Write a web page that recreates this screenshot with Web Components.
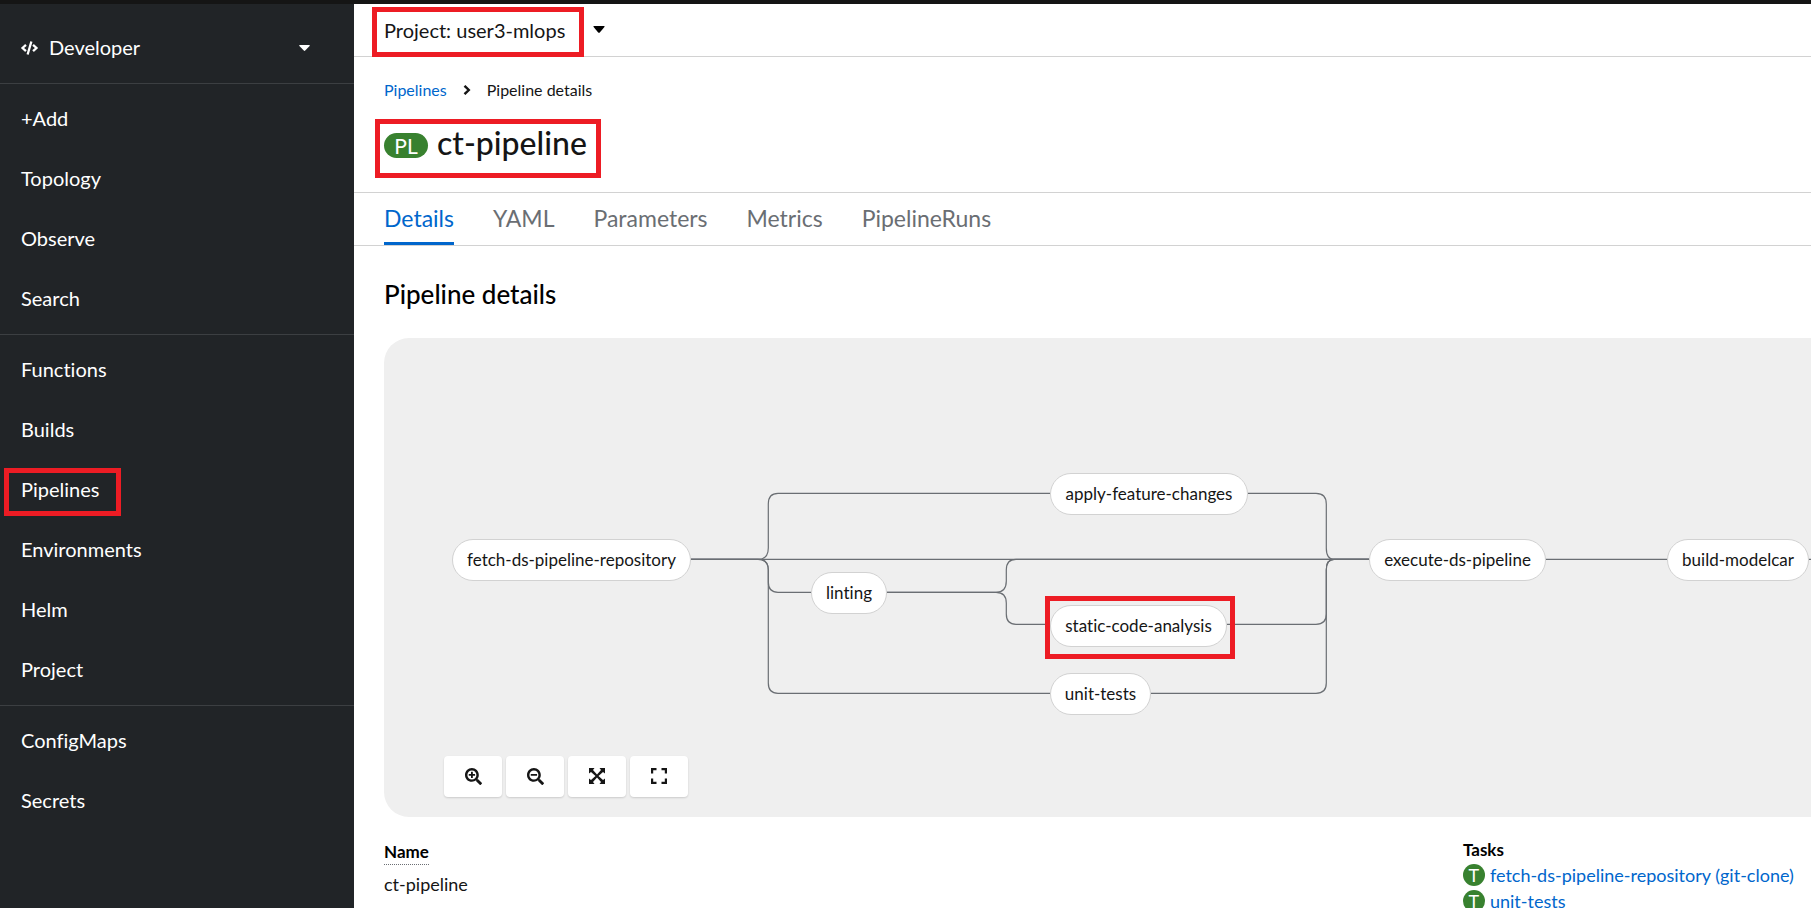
<!DOCTYPE html>
<html lang="en">
<head>
<meta charset="utf-8">
<title>ct-pipeline · Pipeline details</title>
<style>
  html, body { margin: 0; height: 100%; }
  body { background: #fff; color: #151515; font: 400 18px/24px Lato, "Liberation Sans", sans-serif; font-variant-ligatures: none; overflow: hidden; }
</style>
</head>
<body>
<console-shell>
  <console-nav slot="nav">
    <nav-section>
      <nav-item>+Add</nav-item>
      <nav-item>Topology</nav-item>
      <nav-item>Observe</nav-item>
      <nav-item>Search</nav-item>
    </nav-section>
    <nav-section>
      <nav-item>Functions</nav-item>
      <nav-item>Builds</nav-item>
      <nav-item marked>Pipelines</nav-item>
      <nav-item>Environments</nav-item>
      <nav-item>Helm</nav-item>
      <nav-item>Project</nav-item>
    </nav-section>
    <nav-section>
      <nav-item>ConfigMaps</nav-item>
      <nav-item>Secrets</nav-item>
    </nav-section>
  </console-nav>
  <project-bar>Project: user3-mlops</project-bar>
  <page-heading kind="PL" parent="Pipelines" current="Pipeline details">ct-pipeline</page-heading>
  <page-tabs items="Details,YAML,Parameters,Metrics,PipelineRuns"></page-tabs>
  <pipeline-details></pipeline-details>
</console-shell>

<script>
const define = (name, html, setup) => {
  const template = document.createElement('template');
  template.innerHTML = html;
  customElements.define(name, class extends HTMLElement {
    constructor() {
      super();
      this.attachShadow({ mode: 'open' }).append(template.content.cloneNode(true));
    }
    connectedCallback() {
      if (setup && !this.ready) { this.ready = true; setup(this, this.shadowRoot); }
    }
  });
};

/* Red frame drawn round whatever is slotted in. */
define('call-out', `
  <style>
    :host { display: block; width: fit-content; position: relative; }
    i { position: absolute; inset: var(--frame, -8px); border: 5px solid #ed1c24; pointer-events: none; }
  </style>
  <slot></slot><i></i>`);

define('console-shell', `
  <style>
    :host { display: grid; grid-template-columns: 354px minmax(0, 1fr); height: 100vh; overflow: hidden; border-top: 4px solid #151515; box-sizing: border-box; }
    main { min-width: 0; }
  </style>
  <slot name="nav"></slot><main><slot></slot></main>`);

define('console-nav', `
  <style>
    :host { display: block; background: #212427; color: #fff; }
    button { display: flex; align-items: center; box-sizing: border-box; width: 100%; height: 80px; padding: 8px 44px 0 21px; border: 0; border-bottom: 1px solid #3c3f42; background: none; color: inherit; font: inherit; font-variant-ligatures: inherit; font-size: 20px; text-align: left; }
    span { flex: 1; margin-left: 11px; padding-bottom: 2px; }
  </style>
  <button type="button">
    <svg width="17" height="14" viewBox="0 0 640 512" fill="currentColor" aria-hidden="true"><path d="M278.9 511.5l-61-17.7c-6.4-1.8-10-8.5-8.2-14.9L346.2 8.7c1.8-6.4 8.5-10 14.9-8.2l61 17.7c6.4 1.8 10 8.5 8.2 14.9L293.8 503.3c-1.9 6.4-8.5 10.1-14.9 8.2zm-114-112.2l43.5-46.4c4.6-4.9 4.3-12.7-.8-17.2L117 256l90.6-79.7c5.1-4.5 5.5-12.3.8-17.2l-43.5-46.4c-4.5-4.8-12.1-5.1-17-.5L3.8 247.2c-5.1 4.7-5.1 12.8 0 17.5l144.1 135.1c4.9 4.6 12.5 4.4 17-.5zm327.2.6l144.1-135.1c5.1-4.7 5.1-12.8 0-17.5L492.1 112.1c-4.8-4.5-12.4-4.3-17 .5L431.6 159c-4.6 4.9-4.3 12.7.8 17.2L523 256l-90.6 79.7c-5.1 4.5-5.5 12.3-.8 17.2l43.5 46.4c4.5 4.9 12.1 5.1 17 .6z"/></svg>
    <span>Developer</span>
    <svg width="11" height="6" viewBox="0 0 11 6" fill="currentColor" aria-hidden="true"><path d="M.8 0h9.4q1 .2.4 1L6.2 5.6q-.7.6-1.4 0L.4 1Q-.2.2.8 0z"/></svg>
  </button>
  <nav><slot></slot></nav>`);

define('nav-section', `
  <style>
    :host { display: block; padding: 5px 0; border-bottom: 1px solid #3c3f42; }
    :host(:last-child) { border-bottom: 0; }
  </style>
  <slot></slot>`);

define('nav-item', `
  <style>
    :host { display: block; }
    a { display: flex; align-items: center; box-sizing: border-box; height: 60px; padding: 0 0 2px 21px; color: #fff; font-size: 20px; text-decoration: none; }
    call-out { --frame: -9px -22px -15px -17px; }
  </style>
  <a href="#"><slot></slot></a>`, (host, root) => {
    if (!host.hasAttribute('marked')) return;
    const frame = document.createElement('call-out');
    const slot = root.querySelector('slot');
    slot.replaceWith(frame);
    frame.append(slot);
  });

define('project-bar', `
  <style>
    :host { display: block; border-bottom: 1px solid #d2d2d2; }
    button { display: flex; align-items: center; gap: 28px; box-sizing: border-box; height: 52px; padding: 0 0 0 30px; border: 0; background: none; color: inherit; font: inherit; font-variant-ligatures: inherit; font-size: 20px; }
    call-out { --frame: -11px -19px -14px -12px; padding-bottom: 1px; }
    svg { margin-bottom: 1px; }
  </style>
  <button type="button">
    <call-out><slot></slot></call-out>
    <svg width="12" height="7" viewBox="0 0 12 7" aria-hidden="true"><path d="M1 0h10q1 .2.4 1.1L6.8 6.4q-.8.8-1.6 0L.6 1.1Q0 .2 1 0z"/></svg>
  </button>`);

define('page-heading', `
  <style>
    :host { display: block; padding: 21px 0 29px 30px; border-bottom: 1px solid #d2d2d2; }
    nav { display: flex; align-items: center; gap: 16px; font-size: 16px; }
    a { color: #06c; text-decoration: none; }
    h1 { margin: 21px 0 0; font-size: 32px; line-height: 40px; font-weight: 500; }
    call-out { --frame: -4px -14px -15px -9px; }
    .row { display: flex; align-items: center; gap: 9px; }
    .kind { box-sizing: border-box; width: 44px; height: 25px; margin-top: 4px; border-radius: 13px; background: #38812f; color: #fff; font-size: 21px; line-height: 25px; font-weight: 400; text-align: center; }
  </style>
  <nav aria-label="Breadcrumb">
    <a href="#"></a>
    <svg width="8" height="10" viewBox="0 0 8 10" fill="none" stroke="#151515" stroke-width="2.4" aria-hidden="true"><path d="M1.5.8 5.8 5 1.5 9.2"/></svg>
    <span class="current"></span>
  </nav>
  <h1><call-out><span class="row"><span class="kind"></span><slot></slot></span></call-out></h1>`, (host, root) => {
    root.querySelector('a').textContent = host.getAttribute('parent');
    root.querySelector('.current').textContent = host.getAttribute('current');
    root.querySelector('.kind').textContent = host.getAttribute('kind');
  });

define('page-tabs', `
  <style>
    :host { display: block; padding-left: 30px; border-bottom: 1px solid #d2d2d2; }
    div { display: flex; gap: 39px; }
    button { height: 52px; padding: 0; border: 0; border-bottom: 3px solid transparent; background: none; color: #6a6e73; font: inherit; font-variant-ligatures: inherit; font-size: 23px; }
    button[aria-selected=true] { color: #06c; border-color: #06c; }
  </style>
  <div role="tablist"></div>`, (host, root) => {
    host.getAttribute('items').split(',').forEach((label, i) => {
      const tab = document.createElement('button');
      tab.type = 'button';
      tab.setAttribute('role', 'tab');
      tab.setAttribute('aria-selected', String(i === 0));
      tab.textContent = label;
      root.querySelector('div').append(tab);
    });
  });

define('pipeline-node', `
  <style>
    :host { display: flex; align-items: center; justify-content: center; box-sizing: border-box; position: absolute; height: 42px; border: 1px solid #d2d2d2; border-radius: 21px; background: #fff; font-size: 17px; white-space: nowrap; }
    i { position: absolute; inset: -10px -9px -13px -6px; border: 5px solid #ed1c24; display: none; }
    :host([marked]) i { display: block; }
  </style>
  <slot></slot><i></i>`);

define('pipeline-graph', `
  <style>
    :host { display: block; position: relative; height: 479px; overflow: hidden; background: #efefef; border-radius: 25px 0 0 25px; }
    .edges { position: absolute; left: 0; top: 0; }
    .tools { position: absolute; left: 60px; bottom: 20px; display: flex; gap: 4px; }
    .tools button { display: flex; align-items: center; justify-content: center; width: 58px; height: 41px; padding: 0 0 1px; border: 0; border-radius: 4px; background: #fff; color: #151515; box-shadow: 0 1px 2px rgba(3, 3, 3, .15); }
  </style>
  <svg class="edges" width="1440" height="479" fill="none" stroke="#6a6e73" stroke-width="1.2" aria-hidden="true">
    <path d="M307 221.300H985"/>
    <path d="M307 221.300H374Q384.300 221.300 384.300 210V166Q384.300 155.300 394 155.300H666"/>
    <path d="M307 221.300H374Q384.300 221.300 384.300 232V244Q384.300 254.300 394 254.300H427"/>
    <path d="M307 221.300H374Q384.300 221.300 384.300 232V345Q384.300 355.300 394 355.300H666"/>
    <path d="M503 254.300H612Q622.300 254.300 622.300 243V232Q622.300 221.300 632 221.300H985"/>
    <path d="M503 254.300H612Q622.300 254.300 622.300 265V276Q622.300 286.300 632 286.300H666"/>
    <path d="M864 155.300H932Q942.300 155.300 942.300 166V210Q942.300 221.300 950 221.300H985"/>
    <path d="M843 286.300H932Q942.300 286.300 942.300 276V232Q942.300 221.300 950 221.300H985"/>
    <path d="M767 355.300H932Q942.300 355.300 942.300 345V232Q942.300 221.300 950 221.300H985"/>
    <path d="M1161 221.300H1283M1425 221.300H1440"/>
  </svg>
  <pipeline-node style="left:68px;top:201px;width:239px">fetch-ds-pipeline-repository</pipeline-node>
  <pipeline-node style="left:427px;top:234px;width:76px">linting</pipeline-node>
  <pipeline-node style="left:666px;top:135px;width:198px">apply-feature-changes</pipeline-node>
  <pipeline-node style="left:666px;top:267px;width:177px" marked>static-code-analysis</pipeline-node>
  <pipeline-node style="left:666px;top:335px;width:101px">unit-tests</pipeline-node>
  <pipeline-node style="left:985px;top:201px;width:177px">execute-ds-pipeline</pipeline-node>
  <pipeline-node style="left:1283px;top:201px;width:142px">build-modelcar</pipeline-node>
  <div class="tools">
    <button type="button" aria-label="Zoom in"><svg width="17" height="17" viewBox="0 0 512 512" fill="currentColor"><path d="M304 192v32c0 6.600-5.400 12-12 12h-56v56c0 6.600-5.400 12-12 12h-32c-6.600 0-12-5.400-12-12v-56h-56c-6.600 0-12-5.400-12-12v-32c0-6.600 5.400-12 12-12h56v-56c0-6.600 5.400-12 12-12h32c6.600 0 12 5.400 12 12v56h56c6.600 0 12 5.400 12 12zm201 284.700L476.700 505c-9.400 9.400-24.600 9.400-33.900 0L343 405.300c-4.500-4.500-7-10.600-7-17V372c-35.300 27.600-79.700 44-128 44C93.100 416 0 322.900 0 208S93.100 0 208 0s208 93.100 208 208c0 48.300-16.400 92.700-44 128h16.300c6.400 0 12.500 2.500 17 7l99.700 99.700c9.300 9.400 9.300 24.600 0 34zM344 208c0-75.200-60.800-136-136-136S72 132.800 72 208s60.800 136 136 136 136-60.800 136-136z"/></svg></button>
    <button type="button" aria-label="Zoom out"><svg width="17" height="17" viewBox="0 0 512 512" fill="currentColor"><path d="M304 192v32c0 6.600-5.400 12-12 12H124c-6.600 0-12-5.400-12-12v-32c0-6.600 5.400-12 12-12h168c6.600 0 12 5.400 12 12zm201 284.700L476.700 505c-9.400 9.400-24.600 9.400-33.900 0L343 405.300c-4.500-4.500-7-10.600-7-17V372c-35.300 27.600-79.700 44-128 44C93.100 416 0 322.900 0 208S93.100 0 208 0s208 93.100 208 208c0 48.300-16.400 92.700-44 128h16.300c6.400 0 12.500 2.500 17 7l99.700 99.700c9.300 9.400 9.300 24.600 0 34zM344 208c0-75.200-60.800-136-136-136S72 132.800 72 208s60.800 136 136 136 136-60.800 136-136z"/></svg></button>
    <button type="button" aria-label="Fit to screen"><svg width="16" height="16" viewBox="0 0 16 16" fill="currentColor"><path d="M0 0h5.500L4 2l4 4.500L12 2l-1.500-2H16v5.500L14 4 9.500 8l4.500 4 2-1.500V16h-5.500l1.500-2-4-4.500L4 14l1.500 2H0v-5.500L2 12l4.500-4L2 4 0 5.500z"/></svg></button>
    <button type="button" aria-label="Full screen"><svg width="16" height="16" viewBox="0 0 16 16" fill="none" stroke="currentColor" stroke-width="2.200"><path d="M1.100 5.500V1.100H5.500M10.500 1.100h4.400v4.400M14.900 10.500v4.400h-4.400M5.500 14.900H1.100v-4.400"/></svg></button>
  </div>`);

define('task-link', `
  <style>
    :host { display: flex; align-items: center; gap: 5px; height: 26px; white-space: nowrap; }
    span { width: 22px; height: 22px; border-radius: 50%; background: #38812f; color: #fff; font-size: 18px; line-height: 22px; text-align: center; }
    a { color: #06c; font-size: 18px; text-decoration: none; }
  </style>
  <span>T</span><a href="#"><slot></slot></a>`);

define('pipeline-details', `
  <style>
    :host { display: block; padding: 32px 0 0 30px; }
    h2 { margin: 0 0 28px; font-size: 26px; line-height: 32px; font-weight: 500; color: #000; }
    .facts { display: grid; grid-template-columns: minmax(0, 31fr) minmax(0, 10fr); padding-top: 21px; }
    dl, dd { margin: 0; }
    dt { font-size: 17px; font-weight: 700; color: #000; }
    .name { padding-top: 2px; }
    .name dt span { display: inline-block; height: 24px; border-bottom: 1px dotted #6a6e73; }
    .name dd { padding-top: 7px; }
  </style>
  <h2>Pipeline details</h2>
  <pipeline-graph></pipeline-graph>
  <div class="facts">
    <dl class="name"><dt><span>Name</span></dt><dd>ct-pipeline</dd></dl>
    <dl>
      <dt>Tasks</dt>
      <dd><task-link>fetch-ds-pipeline-repository (git-clone)</task-link><task-link>unit-tests</task-link></dd>
    </dl>
  </div>`);
</script>
</body>
</html>
